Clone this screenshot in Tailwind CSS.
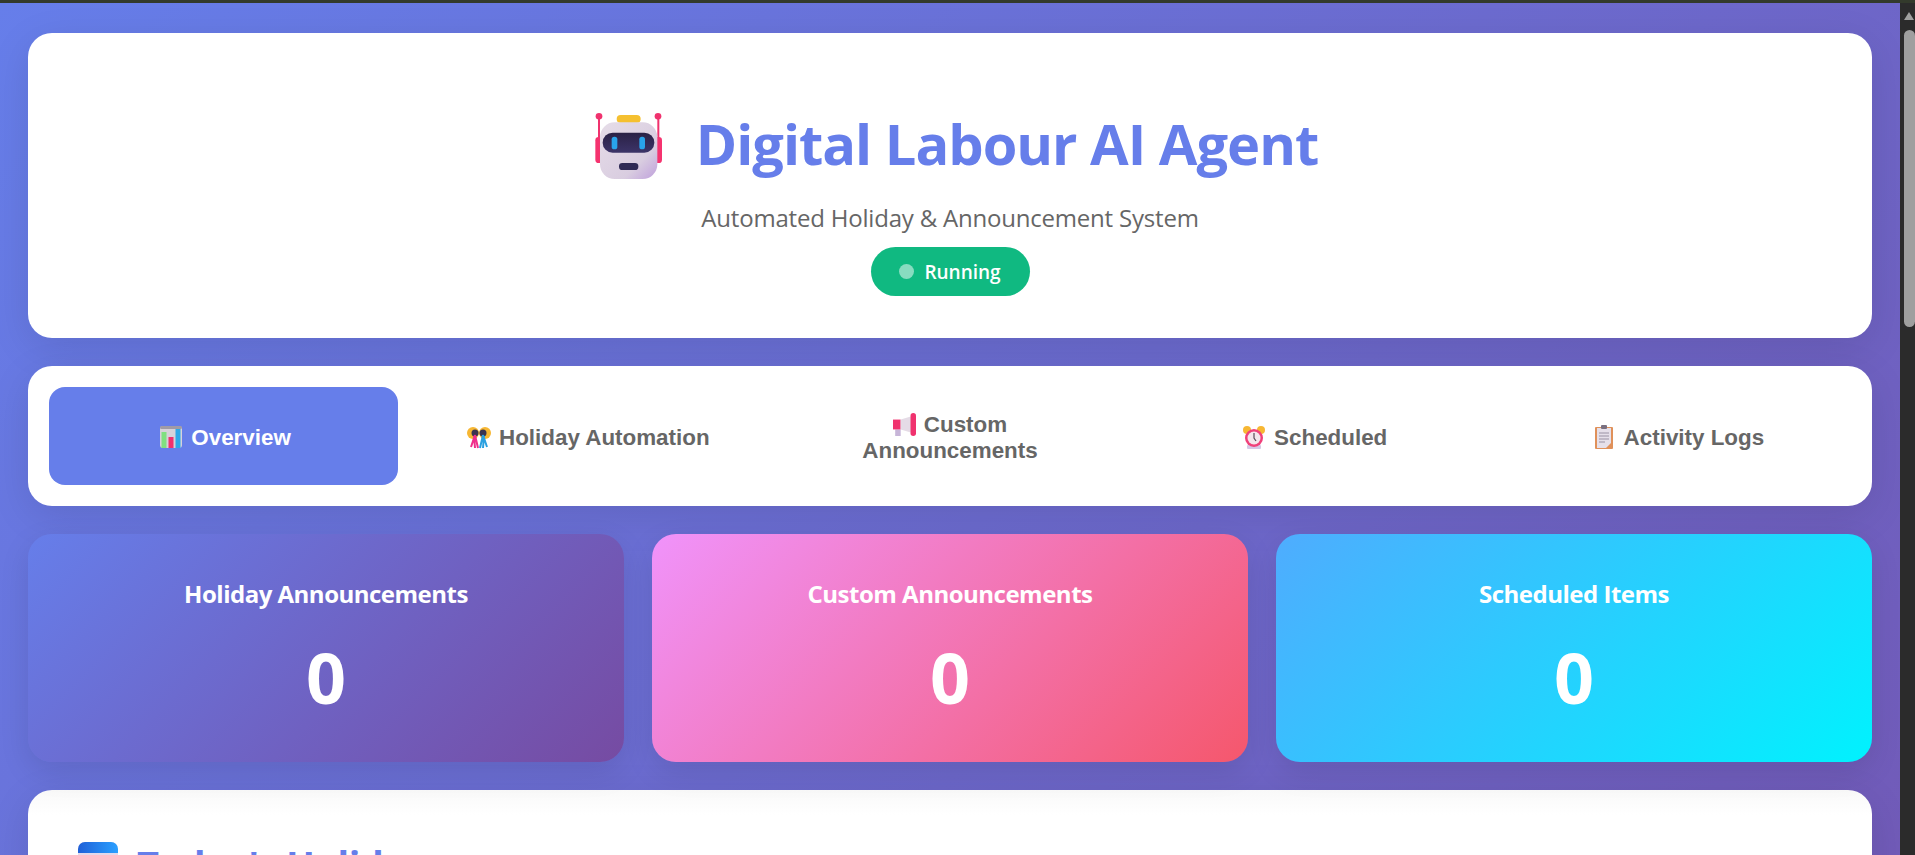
<!DOCTYPE html>
<html lang="en">

<head>
  <meta charset="UTF-8">
  <meta name="viewport" content="width=device-width, initial-scale=1.0">
  <title>Digital Labour AI Agent</title>
  <script src="https://cdn.jsdelivr.net/npm/@tailwindcss/browser@4"></script>
</head>

<body class="h-[855px] overflow-hidden bg-[#2b2b2b] font-['Open_Sans','Noto_Sans',sans-serif]">

  <!-- Window edge -->
  <div class="h-[3px] bg-[#333a2c]"></div>

  <div class="flex h-[852px]">
    <!-- Page -->
    <div class="flex-1 overflow-hidden">
      <div class="h-[2100px] bg-[linear-gradient(135deg,#667eea,#764ba2)] px-[28px] pt-[30px]">

        <!-- Header -->
        <header class="h-[305px] rounded-[24px] bg-white pt-[70px] text-center shadow-[0_10px_40px_rgba(0,0,0,0.1)]">
          <div class="flex items-center justify-center gap-[32px] pl-[12px]">
            <svg class="mt-[5px]" width="70" height="70" viewBox="40 30 210 210">
              <defs>
                <linearGradient id="robotFace" x1="0" y1="0" x2="1" y2="1">
                  <stop offset="0" stop-color="#e6dde8"/>
                  <stop offset="0.7" stop-color="#d9cde0"/>
                  <stop offset="1" stop-color="#bfa0dc"/>
                </linearGradient>
                <linearGradient id="robotVisor" x1="0" y1="0" x2="0" y2="1">
                  <stop offset="0" stop-color="#2a2145"/>
                  <stop offset="1" stop-color="#3c3468"/>
                </linearGradient>
              </defs>
              <rect x="52" y="50" width="6" height="80" fill="#f0326e"/>
              <rect x="230" y="50" width="6" height="80" fill="#f0326e"/>
              <circle cx="55" cy="46" r="10" fill="#f0326e"/>
              <circle cx="232" cy="46" r="10" fill="#f0326e"/>
              <rect x="44" y="108" width="24" height="78" rx="10" fill="#f5336f"/>
              <rect x="220" y="108" width="24" height="78" rx="10" fill="#f5336f"/>
              <rect x="108" y="42" width="72" height="24" rx="12" fill="#f5c030"/>
              <rect x="58" y="64" width="172" height="170" rx="44" fill="url(#robotFace)"/>
              <rect x="66" y="95" width="155" height="60" rx="30" fill="url(#robotVisor)"/>
              <rect x="93" y="107" width="17" height="38" rx="8" fill="#29a3ea"/>
              <rect x="176" y="107" width="17" height="38" rx="8" fill="#29a3ea"/>
              <rect x="115" y="186" width="58" height="21" rx="10" fill="#2f2a55"/>
            </svg>
            <h1 class="text-[56px] leading-[80px] font-bold tracking-[-1px] text-[#667eea]">Digital Labour AI Agent</h1>
          </div>
          <p class="mt-[19px] text-[24px] leading-[32px] tracking-[-0.2px] text-[#666]">Automated Holiday &amp; Announcement System</p>
          <div class="mt-[13px] inline-flex h-[49px] w-[159px] items-center justify-center gap-[10px] rounded-full bg-[#10b981] pt-[2px] text-[19px] font-semibold text-white">
            <span class="-mt-[2px] h-[15px] w-[15px] rounded-full bg-white/50"></span>
            <span>Running</span>
          </div>
        </header>

        <!-- Tabs -->
        <nav class="mt-[28px] grid h-[140px] grid-cols-5 items-center gap-[14px] rounded-[24px] bg-white px-[21px] font-['Liberation_Sans',sans-serif] text-[22.4px] leading-[25.6px] font-bold text-[#666] shadow-[0_10px_40px_rgba(0,0,0,0.1)]">
          <button class="h-[98px] rounded-[16px] bg-[#667eea] pt-[3px] pl-[3px] text-white">
            <svg class="mr-[8px] inline-block align-[-4px]" width="24" height="24" viewBox="0 0 24 24">
              <rect x="1" y="1" width="22" height="22" rx="3" fill="#d6d2da"/>
              <rect x="1" y="1" width="22" height="3" rx="1.5" fill="#a09ba6"/>
              <rect x="2.5" y="7" width="5" height="16" fill="#80e080"/>
              <rect x="9.5" y="12" width="5" height="11" fill="#f0306e"/>
              <rect x="16.5" y="4" width="5" height="19" fill="#2ea8e8"/>
            </svg>Overview
          </button>
          <button class="h-[98px] rounded-[16px] pt-[3px] pl-[3px]">
            <svg class="mr-[8px] inline-block align-[-4px]" width="24" height="24" viewBox="0 0 24 24">
              <circle cx="6" cy="8" r="6" fill="#f7b733"/>
              <circle cx="18" cy="8" r="6" fill="#f7b733"/>
              <circle cx="8" cy="8" r="3.5" fill="#3b3350"/>
              <circle cx="16" cy="8" r="3.5" fill="#3b3350"/>
              <path d="M8 10 L4 22 M8 10 L11 23 M7 11 L8 23" stroke="#ef2f8b" stroke-width="2" fill="none"/>
              <path d="M16 10 L13 23 M16 10 L20 22 M17 11 L16 23" stroke="#2aa0e0" stroke-width="2" fill="none"/>
            </svg>Holiday Automation
          </button>
          <button class="h-[98px] rounded-[16px] px-[40px] pt-[3px]">
            <svg class="mr-[8px] inline-block align-[-4px]" width="23" height="23" viewBox="0 0 21 21">
              <rect x="2" y="15" width="5" height="6" fill="#c7b5d8"/>
              <rect x="0" y="6" width="7" height="9" fill="#f0326e"/>
              <path d="M7 6 L17 3 V18 L7 15 Z" fill="#e5dbe6"/>
              <rect x="16" y="0" width="5" height="21" rx="2.5" fill="#f0326e"/>
            </svg>Custom Announcements
          </button>
          <button class="h-[98px] rounded-[16px] pt-[3px] pl-[3px]">
            <svg class="mr-[8px] inline-block align-[-4px]" width="24" height="24" viewBox="0 0 24 24">
              <circle cx="5" cy="5" r="4" fill="#f7b733"/>
              <circle cx="19" cy="5" r="4" fill="#f7b733"/>
              <rect x="5" y="20" width="14" height="4" rx="1" fill="#d6c8e6"/>
              <circle cx="12" cy="13" r="9" fill="#f0407a"/>
              <circle cx="12" cy="13" r="6.5" fill="#f4e6ec"/>
              <path d="M12 8 V13 L14 16" stroke="#5a4a5a" stroke-width="1.2" fill="none"/>
            </svg>Scheduled
          </button>
          <button class="h-[98px] rounded-[16px] pt-[3px] pl-[3px]">
            <svg class="mr-[8px] inline-block align-[-4px]" width="24" height="24" viewBox="0 0 24 24">
              <rect x="3" y="2" width="18" height="22" rx="1" fill="#e0915a"/>
              <path d="M5 3 H19 V18 L14 23 H5 Z" fill="#e6e0ea"/>
              <rect x="9" y="0" width="6" height="4" rx="1" fill="#7a7080"/>
              <path d="M7 8 H17 M7 11 H17 M7 14 H17 M7 17 H13" stroke="#9a92a4" stroke-width="1.2"/>
            </svg>Activity Logs
          </button>
        </nav>

        <!-- Stats -->
        <section class="mt-[28px] grid grid-cols-3 gap-[28px]">
          <div class="h-[228px] rounded-[24px] bg-[linear-gradient(135deg,#667eea,#764ba2)] pt-[43px] text-center text-white shadow-[0_10px_30px_rgba(0,0,0,0.1)]">
            <h3 class="text-[24px] leading-[33px] font-bold tracking-[-0.5px]">Holiday Announcements</h3>
            <p class="mt-[18px] text-[70px] leading-[98px] font-bold">0</p>
          </div>
          <div class="h-[228px] rounded-[24px] bg-[linear-gradient(135deg,#f093fb,#f5576c)] pt-[43px] text-center text-white shadow-[0_10px_30px_rgba(0,0,0,0.1)]">
            <h3 class="text-[24px] leading-[33px] font-bold tracking-[-0.5px]">Custom Announcements</h3>
            <p class="mt-[18px] text-[70px] leading-[98px] font-bold">0</p>
          </div>
          <div class="h-[228px] rounded-[24px] bg-[linear-gradient(135deg,#4facfe,#00f2fe)] pt-[43px] text-center text-white shadow-[0_10px_30px_rgba(0,0,0,0.1)]">
            <h3 class="text-[24px] leading-[33px] font-bold tracking-[-0.5px]">Scheduled Items</h3>
            <p class="mt-[18px] text-[70px] leading-[98px] font-bold">0</p>
          </div>
        </section>

        <!-- Today's holidays -->
        <section class="mt-[28px] rounded-[24px] bg-[linear-gradient(#f9f9f9,#fff_25px)] px-[50px] pt-[52px] pb-[40px] shadow-[0_10px_40px_rgba(0,0,0,0.1)]">
          <h2 class="flex items-start gap-[19px] text-[38px] leading-[52px] font-bold tracking-[-0.5px] text-[#667eea]">
            <svg width="40" height="46" viewBox="0 0 40 46">
              <defs>
                <linearGradient id="calendarTop" x1="0" y1="0" x2="1" y2="0">
                  <stop offset="0" stop-color="#1f60d8"/>
                  <stop offset="1" stop-color="#2aa0ff"/>
                </linearGradient>
              </defs>
              <rect x="0" y="0" width="40" height="46" rx="7" fill="#e2d8ea"/>
              <path d="M0 11 V7 a7 7 0 0 1 7 -7 H33 a7 7 0 0 1 7 7 V11 Z" fill="url(#calendarTop)"/>
            </svg>
            <span class="-mt-[4px]">Today's Holidays</span>
          </h2>
        </section>
      </div>
    </div>

    <!-- Scrollbar -->
    <div class="w-[15px] bg-[#2b2b2b] pt-[9px] pl-[4px]">
      <div class="h-0 w-0 border-x-[5.5px] border-b-[8px] border-x-transparent border-b-[#a0a0a0]"></div>
      <div class="mt-[10px] h-[297px] w-[11px] rounded-full bg-[#9f9f9f]"></div>
    </div>
  </div>

</body>

</html>
